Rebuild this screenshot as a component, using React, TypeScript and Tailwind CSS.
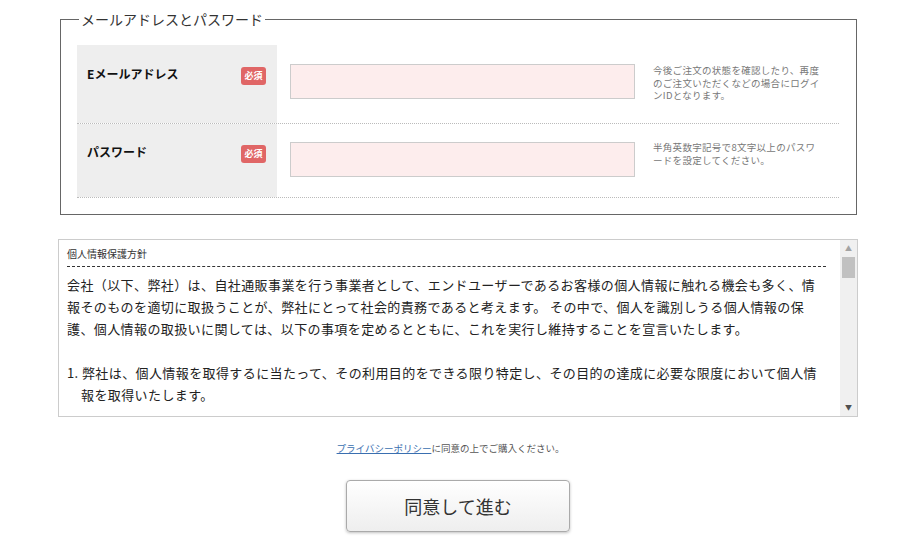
export default function App() {
  const f = { fontFamily: '"Noto Sans CJK JP", "Noto Sans", sans-serif' };
  const Row = ({ label, note, last }: { label: string; note: string; last?: boolean }) => (
    <div className="flex border-b border-dotted border-[#bbb]">
      <div className={`w-[200px] bg-[#eeeeee] flex justify-between pl-[10px] pr-[11px] ${last ? 'pt-[19px] h-[73px]' : 'pt-[20px] h-[78px]'}`}>
        <span className="text-[12px] font-bold text-[#111] leading-[18px]">{label}</span>
        <span className="bg-[#e06666] text-white text-[9px] font-bold rounded-[3px] h-[18px] w-[25px] flex items-center justify-center mt-[2px]">必須</span>
      </div>
      <div className={`ml-[13px] ${last ? 'pt-[18px]' : 'pt-[19px]'}`}>
        <div className="w-[345px] h-[35px] bg-[#fdeded] border border-[#ccc]" />
      </div>
      <div className={`ml-[18px] w-[172px] text-[9.5px] tracking-[0.3px] leading-[12.5px] text-[#777] ${last ? 'pt-[17px]' : 'pt-[19px]'}`}>{note}</div>
    </div>
  );
  return (
    <div className="w-[901px] h-[557px] bg-white relative" style={f}>
      <div className="absolute left-[60px] top-[10px] w-[797px]">
        <fieldset className="border border-[#666] h-[205px] px-[16px] m-0">
          <legend className="text-[14px] text-[#333] px-[2px] leading-[18px] ml-[2px]">メールアドレスとパスワード</legend>
          <div className="mt-[17px] w-[762px]">
            <Row label="Eメールアドレス" note="今後ご注文の状態を確認したり、再度のご注文いただくなどの場合にログインIDとなります。" />
            <Row label="パスワード" note="半角英数字記号で8文字以上のパスワードを設定してください。" last />
          </div>
        </fieldset>
      </div>
      <div className="absolute left-[58px] top-[239px] w-[800px] h-[178px] border border-[#ccc] flex">
        <div className="flex-1 overflow-hidden pl-[8px] pr-[14px] pt-[6px]">
          <div className="text-[10px] text-[#333] leading-[16px]">個人情報保護方針</div>
          <div className="border-b border-dashed border-[#333] mb-[7px] mt-[4px]" />
          <div className="text-[13px] text-[#222] leading-[22px] tracking-[0.4px]">
            <p>会社（以下、弊社）は、自社通販事業を行う事業者として、エンドユーザーであるお客様の個人情報に触れる機会も多く、情報そのものを適切に取扱うことが、弊社にとって社会的責務であると考えます。 その中で、個人を識別しうる個人情報の保護、個人情報の取扱いに関しては、以下の事項を定めるとともに、これを実行し維持することを宣言いたします。</p>
            <p className="mt-[22px] pl-[14px] -indent-[14px]">1. 弊社は、個人情報を取得するに当たって、その利用目的をできる限り特定し、その目的の達成に必要な限度において個人情報を取得いたします。</p>
          </div>
        </div>
        <div className="w-[17px] bg-[#f0f0f0] flex flex-col items-center">
          <div className="h-[17px] flex items-center justify-center text-[#a3a3a3] text-[7px]">▲</div>
          <div className="w-[13px] h-[21px] bg-[#c1c1c1]" />
          <div className="flex-1" />
          <div className="h-[17px] flex items-center justify-center text-[#505050] text-[7px]">▼</div>
        </div>
      </div>
      <div className="absolute top-[441px] left-0 w-full text-center text-[9.5px] text-[#555]">
        <span className="text-[#3a6fb0] underline">プライバシーポリシー</span>に同意の上でご購入ください。
      </div>
      <div className="absolute top-[480px] left-[346px] w-[224px] h-[52px] rounded-[4px] border border-[#aaa] bg-gradient-to-b from-white to-[#eeeeee] shadow-[0_1px_3px_rgba(0,0,0,0.25)] flex items-center justify-center text-[18px] text-[#333]">
        同意して進む
      </div>
    </div>
  );
}
